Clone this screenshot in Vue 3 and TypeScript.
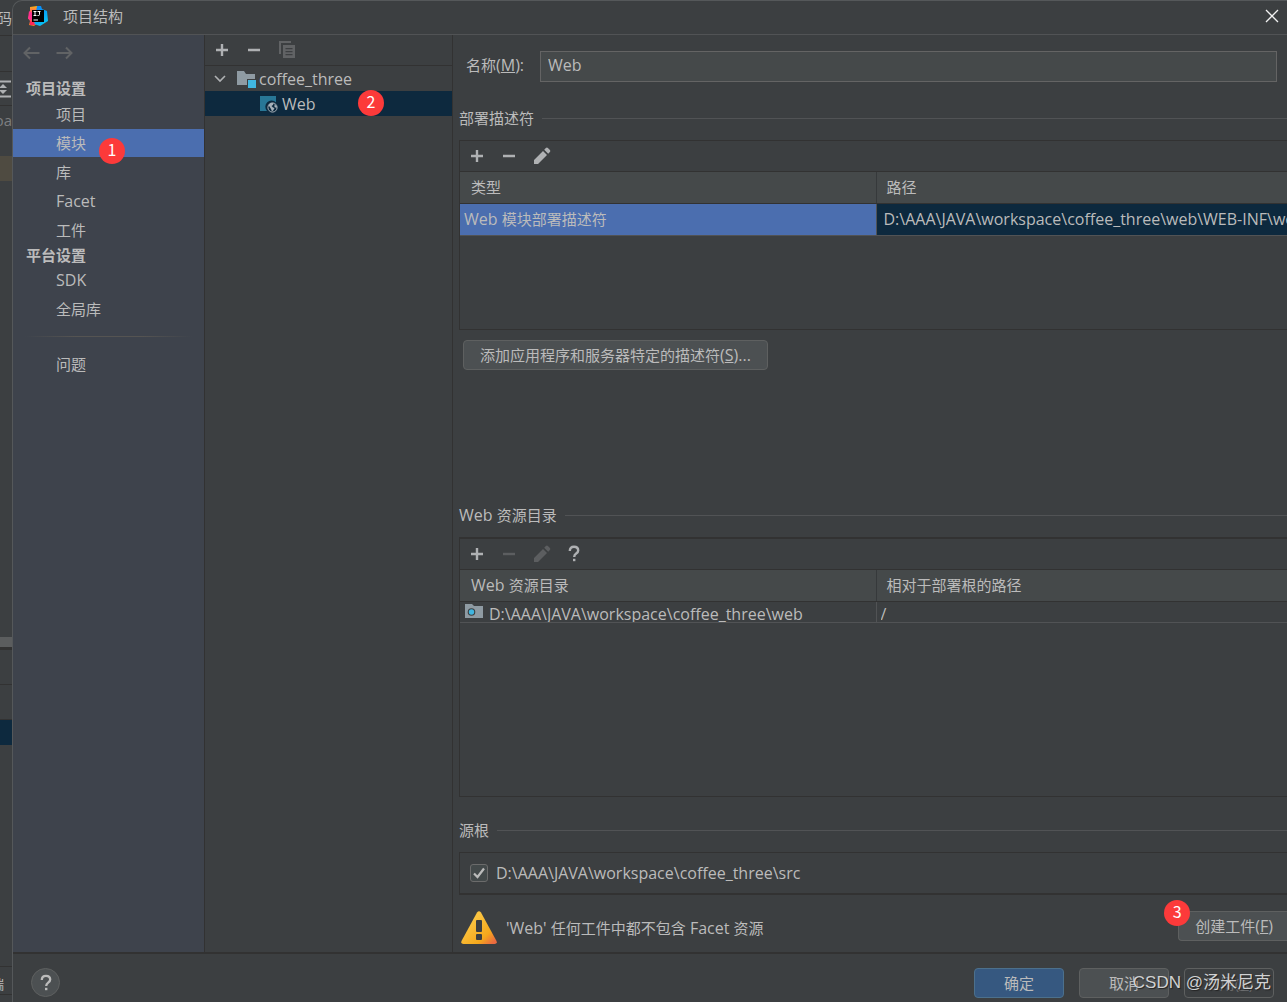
<script setup lang="ts">
import { ref } from 'vue'

interface NavGroup {
  title: string
  items: string[]
}

const groups: NavGroup[] = [
  { title: '项目设置', items: ['项目', '模块', '库', 'Facet', '工件'] },
  { title: '平台设置', items: ['SDK', '全局库'] },
]

const selected = ref('模块')
const moduleName = ref('Web')
const srcChecked = ref(true)

const isLatin = (s: string): boolean => /^[A-Za-z]+$/.test(s)
</script>

<template>
  <div class="screen">
    <aside class="backdrop" aria-hidden="true">
      <div class="bd-title"><span>码</span></div>
      <div class="bd-bar"></div>
      <div class="bd-tools">
        <svg width="12" height="18" viewBox="0 0 12 18">
          <path d="M0 1.500h11M0 16.500h11" stroke="#afb1b3" stroke-width="2" />
          <path d="M-1 8L3 4l4 4zM-1 10l4 4 4-4z" fill="#afb1b3" />
        </svg>
      </div>
      <div class="bd-path"><span>pa</span></div>
      <div class="bd-mark"></div>
      <div class="bd-fill"></div>
      <div class="bd-grip"></div>
      <div class="bd-row"></div>
      <div class="bd-row"></div>
      <div class="bd-sel"></div>
      <div class="bd-rest"></div>
      <div class="bd-tab"><span>端</span></div>
      <div class="bd-end"></div>
    </aside>

    <div class="dialog" role="dialog" aria-labelledby="dlg-title">
      <header class="titlebar">
        <svg class="logo" width="20" height="20" viewBox="0 0 20 20">
          <defs>
            <linearGradient id="lgA" x1="0" y1="0" x2="0" y2="1">
              <stop offset="0" stop-color="#fdb60d" />
              <stop offset="0.45" stop-color="#ff318c" />
              <stop offset="1" stop-color="#fc801d" />
            </linearGradient>
            <linearGradient id="lgB" x1="0" y1="0" x2="0.6" y2="1">
              <stop offset="0" stop-color="#087cfa" />
              <stop offset="1" stop-color="#07c3f2" />
            </linearGradient>
          </defs>
          <path d="M2 1l7-1 4 4-2 12-5 4-5-1 1-4-2-3 2-5z" fill="url(#lgA)" />
          <path d="M9 0l4 0 1 3 5 2 1 10-8 5-6-2z" fill="url(#lgB)" />
          <path d="M1 5l3 2v7l-4-1z" fill="#ff318c" />
          <path d="M2 15l4 1 1 3-5 0z" fill="#fe2857" />
          <rect x="4" y="4" width="12" height="12" fill="#000" />
          <path d="M5.500 5.500h3M7 5.500v4M5.500 9.500h3M9.500 5.500h3M11.500 5.500v3q0 1-1 1h-1M5.500 14h4.500" stroke="#fff" fill="none" />
        </svg>
        <h1 id="dlg-title">项目结构</h1>
        <button class="close" aria-label="关闭">
          <svg width="14" height="14" viewBox="0 0 14 14"><path d="M1 1l12 12M13 1L1 13" stroke="#f2f2f2" stroke-width="1.300" /></svg>
        </button>
      </header>

      <div class="content">
        <nav class="sidebar">
          <div class="history">
            <button disabled aria-label="后退">
              <svg width="17" height="14" viewBox="0 0 17 14"><path d="M16.500 7H1.500M7 1.500L1.500 7 7 12.500" stroke="#616365" stroke-width="2" fill="none" /></svg>
            </button>
            <button disabled aria-label="前进">
              <svg width="17" height="14" viewBox="0 0 17 14"><path d="M.5 7h15M10 1.500L15.500 7 10 12.500" stroke="#616365" stroke-width="2" fill="none" /></svg>
            </button>
          </div>
          <template v-for="g in groups" :key="g.title">
            <h2>{{ g.title }}</h2>
            <ul>
              <li v-for="i in g.items" :key="i">
                <button class="nav-item" :class="{ on: selected === i }" @click="selected = i">
                  <span :class="{ lat: isLatin(i) }">{{ i }}</span>
                  <span v-if="i === '模块'" class="badge b1">1</span>
                </button>
              </li>
            </ul>
          </template>
          <hr />
          <button class="nav-item">问题</button>
        </nav>

        <section class="tree">
          <div class="toolbar tree-tools">
            <button aria-label="添加"><svg width="18" height="18" viewBox="0 0 18 18"><path d="M9 3v12M3 9h12" stroke="#afb1b3" stroke-width="2.400" /></svg></button>
            <button aria-label="移除"><svg width="18" height="18" viewBox="0 0 18 18"><path d="M3 9h12" stroke="#afb1b3" stroke-width="2.400" /></svg></button>
            <button disabled aria-label="复制">
              <svg width="18" height="18" viewBox="0 0 18 18">
                <path d="M0 0h12v2H2v11H0z" fill="#616365" />
                <path fill-rule="evenodd" d="M4 4h12v13H4zM6.500 7v1.200h7V7zM6.500 10v1.200h7V10zM6.500 13v1.200h7V13z" fill="#616365" />
              </svg>
            </button>
          </div>
          <button class="node root">
            <svg width="12" height="8" viewBox="0 0 12 8"><path d="M1 1l5 5 5-5" stroke="#afb1b3" stroke-width="1.600" fill="none" /></svg>
            <svg class="folder" width="20" height="18" viewBox="0 0 20 18">
              <path d="M0 1h7l2 3h9v5h-8v6H0z" fill="#8f9ba3" />
              <rect x="11" y="10" width="8" height="8" fill="#40b6e0" />
            </svg>
            <span class="lat">coffee_three</span>
          </button>
          <button class="node leaf">
            <svg width="18" height="18" viewBox="0 0 18 18">
              <path d="M0 1h16v6.500A6 6 0 0 0 7 16H0z" fill="#287796" />
              <circle cx="12.500" cy="12.500" r="4.600" fill="none" stroke="#a8b2ba" />
              <path d="M8.500 10l2-2 3 0-.5 2-1.500 1 1.500 1.500 1.500.5-1 2-1.500 1.500-1-2.500zM14.500 9l2.500 2.500-.5 1.500-2-1z" fill="#a8b2ba" />
            </svg>
            <span class="lat">Web</span>
            <span class="badge b2">2</span>
          </button>
        </section>

        <main class="editor">
          <div class="name-row">
            <label for="name">名称<span class="lat">(<u>M</u>):</span></label>
            <input id="name" v-model="moduleName" class="lat" type="text" />
          </div>

          <section class="block deploy">
            <h3>部署描述符</h3>
            <div class="panel">
              <div class="toolbar">
                <button aria-label="添加"><svg width="18" height="18" viewBox="0 0 18 18"><path d="M9 3v12M3 9h12" stroke="#afb1b3" stroke-width="2.400" /></svg></button>
                <button aria-label="移除"><svg width="18" height="18" viewBox="0 0 18 18"><path d="M3 9h12" stroke="#afb1b3" stroke-width="2.400" /></svg></button>
                <button aria-label="编辑"><svg width="18" height="18" viewBox="0 0 18 18"><path d="M0 17v-4L9 4l4 4-9 9zM10.200 2.800L11.900 1.100q1-1 2 0l2 2q1 1 0 2L14.200 6.800z" fill="#afb1b3" /></svg></button>
              </div>
              <table>
                <colgroup><col class="first" /><col /></colgroup>
                <thead><tr><th>类型</th><th>路径</th></tr></thead>
                <tbody>
                  <tr class="picked">
                    <td><span class="lat">Web </span>模块部署描述符</td>
                    <td class="lat">D:\AAA\JAVA\workspace\coffee_three\web\WEB-INF\web.xml</td>
                  </tr>
                </tbody>
              </table>
            </div>
            <button class="btn add">添加应用程序和服务器特定的描述符<span class="lat">(<u>S</u>)...</span></button>
          </section>

          <section class="block resources">
            <h3><span><span class="lat">Web </span>资源目录</span></h3>
            <div class="panel">
              <div class="toolbar">
                <button aria-label="添加"><svg width="18" height="18" viewBox="0 0 18 18"><path d="M9 3v12M3 9h12" stroke="#afb1b3" stroke-width="2.400" /></svg></button>
                <button disabled aria-label="移除"><svg width="18" height="18" viewBox="0 0 18 18"><path d="M3 9h12" stroke="#5c5e60" stroke-width="2.400" /></svg></button>
                <button disabled aria-label="编辑"><svg width="18" height="18" viewBox="0 0 18 18"><path d="M0 17v-4L9 4l4 4-9 9zM10.200 2.800L11.900 1.100q1-1 2 0l2 2q1 1 0 2L14.200 6.800z" fill="#5c5e60" /></svg></button>
                <button aria-label="帮助"><svg width="18" height="18" viewBox="0 0 18 18"><path d="M3.800 6q0-4.200 4.200-4.200t4.200 3.700q0 1.700-2 3.100T8.200 12" stroke="#afb1b3" stroke-width="2.400" fill="none" /><rect x="7" y="13.800" width="2.400" height="2.400" fill="#afb1b3" /></svg></button>
              </div>
              <table>
                <colgroup><col class="first" /><col /></colgroup>
                <thead><tr><th><span class="lat">Web </span>资源目录</th><th>相对于部署根的路径</th></tr></thead>
                <tbody>
                  <tr class="plain">
                    <td>
                      <div class="cell">
                        <svg width="18" height="15" viewBox="0 0 18 15">
                          <path d="M0 0h7l2 2h9v12H0z" fill="#8f9ba3" />
                          <circle cx="6.500" cy="8" r="3.800" fill="#3c3f41" />
                          <circle cx="6.500" cy="8" r="2.700" fill="#40b6e0" />
                        </svg>
                        <span class="lat">D:\AAA\JAVA\workspace\coffee_three\web</span>
                      </div>
                    </td>
                    <td><div class="cell"><span class="lat">/</span></div></td>
                  </tr>
                </tbody>
              </table>
            </div>
          </section>

          <section class="block">
            <h3>源根</h3>
            <div class="panel roots">
              <label class="check">
                <input v-model="srcChecked" type="checkbox" />
                <svg class="tick" width="18" height="18" viewBox="0 0 18 18"><path d="M4 9.500l3.500 3.500L14 4.500" stroke="#bbb" stroke-width="2.200" fill="none" /></svg>
                <span class="lat">D:\AAA\JAVA\workspace\coffee_three\src</span>
              </label>
            </div>
          </section>

          <div class="warning">
            <svg width="36" height="34" viewBox="0 0 36 34">
              <defs>
                <linearGradient id="wg" x1="0.300" y1="0.300" x2="1" y2="1">
                  <stop offset="0" stop-color="#fbc440" />
                  <stop offset="0.600" stop-color="#f5a81c" />
                  <stop offset="0.900" stop-color="#eb6b40" />
                </linearGradient>
              </defs>
              <path d="M16 1.500q2-2.500 4 0L35.500 30q1 3-2 3h-31q-3 0-2-3z" fill="url(#wg)" />
              <rect x="15" y="9" width="6" height="12" rx="1" fill="#3c3f41" />
              <rect x="15" y="23" width="6" height="6" rx="1" fill="#3c3f41" />
            </svg>
            <span><span class="lat">'Web' </span>任何工件中都不包含<span class="lat"> Facet </span>资源</span>
            <button class="btn create">创建工件<span class="lat">(<u>F</u>)</span><span class="badge b3">3</span></button>
          </div>
        </main>
      </div>

      <footer>
        <button class="help" aria-label="帮助">
          <svg width="18" height="18" viewBox="0 0 18 18"><path d="M4.800 6q0-4.200 4.200-4.200t4.200 3.700q0 1.700-2 3.100T9.200 12" stroke="#bbb" stroke-width="2.300" fill="none" /><rect x="8" y="13.800" width="2.400" height="2.400" fill="#bbb" /></svg>
        </button>
        <button class="btn primary">确定</button>
        <button class="btn">取消</button>
        <button class="btn off" disabled>应用(<u>A</u>)</button>
        <span class="watermark">CSDN @汤米尼克</span>
      </footer>
    </div>
  </div>
</template>

<style>
body {
  background: #3c3f41;
}
</style>

<style scoped>
* {
  box-sizing: border-box;
}

.screen {
  display: flex;
  min-height: 100vh;
  overflow: hidden;
  background: #3c3f41;
  color: #bbbbbb;
  font: 15px/20px 'Open Sans', 'Noto Sans CJK SC', sans-serif;
}

h1,
h2,
h3,
ul {
  margin: 0;
  padding: 0;
  font-size: 15px;
  font-weight: 400;
  list-style: none;
}

button,
input {
  margin: 0;
  padding: 0;
  border: 0;
  background: none;
  color: inherit;
  font: inherit;
}

svg {
  display: block;
  flex: none;
}

/* Latin runs are set one pixel larger than the Chinese text */
.lat {
  font-size: 16px;
}

/* Slice of the IDE window behind the dialog */
.backdrop {
  display: flex;
  flex-direction: column;
  flex: none;
  width: 12px;
  overflow: hidden;
}

.backdrop > div {
  display: flex;
  flex: none;
  align-items: center;
  justify-content: flex-end;
  border-bottom: 1px solid #323232;
}

.backdrop > .bd-title {
  height: 36px;
}

.backdrop > .bd-bar {
  height: 36px;
}

.backdrop > .bd-tools {
  height: 34px;
}

.backdrop > .bd-path {
  height: 50px;
  padding-bottom: 22px;
  border: 0;
  color: #7c7e80;
}

.backdrop > .bd-mark {
  height: 25px;
  border: 0;
  background: #4f4b41;
}

.backdrop > .bd-fill {
  flex: 457 0 0;
  border: 0;
}

.backdrop > .bd-grip {
  height: 13px;
  border-bottom: 3px solid #323232;
  background: #5b5d5e;
}

.backdrop > .bd-row {
  height: 35px;
}

.backdrop > .bd-sel {
  height: 25px;
  border: 0;
  background: #0d293e;
}

.backdrop > .bd-rest {
  flex: 221 0 0;
}

.backdrop > .bd-tab {
  height: 28px;
  padding: 6px 8px 0 0;
  font-size: 13px;
}

.backdrop > .bd-end {
  height: 7px;
  border: 0;
}

.dialog {
  display: flex;
  flex: 1;
  flex-direction: column;
  min-width: 0;
  border-top: 1px solid #55585a;
  border-left: 1px solid #55585a;
  border-radius: 10px 0 0 0;
  overflow: hidden;
}

.titlebar {
  display: flex;
  flex: none;
  align-items: center;
  height: 34px;
  padding: 0 8px 4px 15px;
  border-bottom: 1px solid #515355;
}

.titlebar h1 {
  margin-left: 15px;
}

.close {
  margin-left: auto;
}

.content {
  display: flex;
  flex: 1;
  border-bottom: 2px solid #323232;
}

.sidebar {
  flex: none;
  width: 192px;
  border-right: 1px solid #323232;
  background: #3e434c;
}

.history {
  display: flex;
  gap: 16px;
  height: 42px;
  padding: 11px 0 0 10px;
  align-items: flex-start;
}

.sidebar h2 {
  padding-left: 13px;
  font-weight: 700;
  line-height: 22px;
}

.sidebar li {
  padding-bottom: 1px;
}

.sidebar h2 + ul {
  margin-bottom: -1px;
}

.nav-item {
  position: relative;
  display: block;
  width: 100%;
  height: 28px;
  padding-left: 43px;
  text-align: left;
}

.nav-item.on {
  background: #4b6eaf;
}

.sidebar h2:first-of-type {
  margin-bottom: 1px;
}

hr {
  height: 1px;
  margin: 13px 12px;
  border: 0;
  background: linear-gradient(90deg, transparent, #555452 30%, #555452 70%, transparent);
}

.badge {
  position: absolute;
  z-index: 1;
  width: 26px;
  height: 26px;
  border-radius: 50%;
  background: #fc3a3a;
  color: #ffffff;
  font: 16px/22px 'Noto Sans CJK SC', sans-serif;
  text-align: center;
}

.b1 {
  top: 9px;
  left: 86px;
}

.b2 {
  top: -1px;
  left: 153px;
}

.b3 {
  top: -12px;
  left: -15px;
}

.tree {
  flex: none;
  width: 248px;
  border-right: 1px solid #323232;
}

.toolbar {
  display: flex;
  gap: 14px;
  align-items: center;
  height: 31px;
  padding-left: 8px;
  border-bottom: 1px solid #323232;
}

.toolbar button:nth-child(3) {
  margin-left: 2px;
}

.tree-tools {
  padding-bottom: 1px;
}

.node {
  position: relative;
  display: flex;
  align-items: center;
  width: 100%;
  height: 25px;
}

.root {
  gap: 11px;
  padding-left: 9px;
}

.root span {
  margin-left: -9px;
}

.leaf {
  gap: 4px;
  padding-left: 55px;
  background: #0d293e;
}

.editor {
  display: flex;
  flex: 1;
  flex-direction: column;
  min-width: 0;
  padding: 16px 0 0 6px;
}

.name-row {
  display: flex;
  align-items: center;
  margin-bottom: 24px;
  padding: 0 10px 0 7px;
}

.name-row label {
  flex: none;
  width: 74px;
  padding-bottom: 3px;
}

.name-row input {
  flex: 1;
  min-width: 0;
  height: 31px;
  padding: 0 7px 3px;
  border: 1px solid #646464;
  background: #45494a;
}

.block {
  display: flex;
  flex-direction: column;
  align-items: flex-start;
}

.block h3 {
  display: flex;
  gap: 8px;
  align-items: center;
  width: 100%;
  height: 24px;
  margin-bottom: 10px;
}

.block h3::after {
  flex: 1;
  height: 1px;
  background: #515355;
  content: '';
}

.deploy {
  flex: none;
  min-height: 397px;
}

.resources {
  flex: 1 0 auto;
  min-height: 314px;
  padding-bottom: 21px;
}

.resources .panel {
  flex: 1;
  border-top-width: 2px;
}

.panel {
  width: 100%;
  border: 1px solid #323232;
  border-right: 0;
  overflow: hidden;
}

.deploy .panel {
  min-height: 190px;
}

table {
  width: 100%;
  border-collapse: collapse;
  table-layout: fixed;
}

.first {
  width: 416px;
}

th {
  height: 31px;
  padding: 0 11px;
  border-bottom: 1px solid #323232;
  background: #45494a;
  font-weight: 400;
  text-align: left;
}

th + th {
  padding-left: 10px;
  border-left: 1px solid #36393b;
}

td {
  padding: 0 4px;
  border-right: 1px solid #515355;
  border-bottom: 1px solid #515355;
  overflow: hidden;
  white-space: nowrap;
}

td:last-child {
  padding-left: 7px;
  border-right: 0;
}

.picked td {
  height: 32px;
  background: #0d293e;
}

.picked td:first-child {
  background: #4b6eaf;
}

.cell {
  display: flex;
  gap: 6px;
  align-items: flex-start;
  height: 20px;
  padding-top: 2px;
  overflow: hidden;
}

.plain td:first-child {
  padding-left: 5px;
}

.plain td:last-child {
  padding-left: 4px;
}

.btn {
  position: relative;
  flex: none;
  height: 30px;
  padding: 0 17px;
  border: 1px solid #5e6060;
  border-radius: 4px;
  background: #4c5052;
  white-space: nowrap;
}

.add {
  margin: 10px 0 0 4px;
  padding: 0 16px;
}

.roots {
  display: flex;
  align-items: center;
  height: 43px;
  padding-left: 10px;
  border-bottom-width: 2px;
}

.check {
  position: relative;
  display: flex;
  gap: 8px;
  align-items: center;
}

.check input {
  width: 18px;
  height: 18px;
  border: 1px solid #6b6b6b;
  border-radius: 3px;
  background: #43494a;
  appearance: none;
}

.tick {
  position: absolute;
  left: 0;
  visibility: hidden;
}

.check input:checked + .tick {
  visibility: visible;
}

.warning {
  display: flex;
  flex: none;
  gap: 9px;
  align-items: center;
  height: 57px;
  padding: 9px 0 0 2px;
}

.create {
  margin: 0 0 4px auto;
  padding: 0 14px 0 16px;
  border-right: 0;
  border-radius: 4px 0 0 4px;
}

footer {
  position: relative;
  display: flex;
  flex: none;
  gap: 15px;
  align-items: center;
  height: 48px;
  padding: 9px 13px 0 18px;
}

footer .btn {
  width: 90px;
  padding: 0;
}

.help {
  display: grid;
  place-items: center;
  width: 29px;
  height: 29px;
  margin-right: auto;
  border: 1px solid #5e6060;
  border-radius: 50%;
  background: #4c5052;
}

footer .primary {
  border-color: #4c708c;
  background: #365880;
}

footer .off {
  background: transparent;
  color: #6c6e70;
}

.watermark {
  position: absolute;
  right: 16px;
  bottom: 8px;
  color: #d0d1d2;
  font: 17px/22px 'Liberation Sans', 'Noto Sans CJK SC', sans-serif;
  text-shadow: 1px 1px 1px #222222;
}
</style>
